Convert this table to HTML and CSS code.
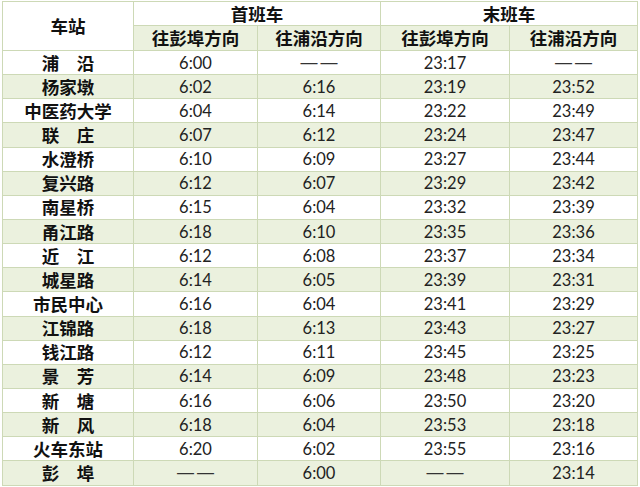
FILE: index.html
```html
<!DOCTYPE html>
<html lang="zh-CN">
<head>
<meta charset="utf-8">
<title>首末班车时刻表</title>
<link rel="stylesheet" href="styles.css">
</head>
<body>
<table class="timetable">
  <colgroup>
    <col class="c-station">
    <col class="c-a">
    <col class="c-b">
    <col class="c-c">
    <col class="c-d">
  </colgroup>
  <thead>
    <tr class="h1">
      <th rowspan="2" class="station-head">车站</th>
      <th colspan="2">首班车</th>
      <th colspan="2">末班车</th>
    </tr>
    <tr class="h2">
      <th>往彭埠方向</th>
      <th>往浦沿方向</th>
      <th>往彭埠方向</th>
      <th>往浦沿方向</th>
    </tr>
  </thead>
  <tbody>
    <tr><th>浦　沿</th><td>6:00</td><td class="dash">——</td><td>23:17</td><td class="dash">——</td></tr>
    <tr><th>杨家墩</th><td>6:02</td><td>6:16</td><td>23:19</td><td>23:52</td></tr>
    <tr><th>中医药大学</th><td>6:04</td><td>6:14</td><td>23:22</td><td>23:49</td></tr>
    <tr><th>联　庄</th><td>6:07</td><td>6:12</td><td>23:24</td><td>23:47</td></tr>
    <tr><th>水澄桥</th><td>6:10</td><td>6:09</td><td>23:27</td><td>23:44</td></tr>
    <tr><th>复兴路</th><td>6:12</td><td>6:07</td><td>23:29</td><td>23:42</td></tr>
    <tr><th>南星桥</th><td>6:15</td><td>6:04</td><td>23:32</td><td>23:39</td></tr>
    <tr><th>甬江路</th><td>6:18</td><td>6:10</td><td>23:35</td><td>23:36</td></tr>
    <tr><th>近　江</th><td>6:12</td><td>6:08</td><td>23:37</td><td>23:34</td></tr>
    <tr><th>城星路</th><td>6:14</td><td>6:05</td><td>23:39</td><td>23:31</td></tr>
    <tr><th>市民中心</th><td>6:16</td><td>6:04</td><td>23:41</td><td>23:29</td></tr>
    <tr><th>江锦路</th><td>6:18</td><td>6:13</td><td>23:43</td><td>23:27</td></tr>
    <tr><th>钱江路</th><td>6:12</td><td>6:11</td><td>23:45</td><td>23:25</td></tr>
    <tr><th>景　芳</th><td>6:14</td><td>6:09</td><td>23:48</td><td>23:23</td></tr>
    <tr><th>新　塘</th><td>6:16</td><td>6:06</td><td>23:50</td><td>23:20</td></tr>
    <tr><th>新　风</th><td>6:18</td><td>6:04</td><td>23:53</td><td>23:18</td></tr>
    <tr><th>火车东站</th><td>6:20</td><td>6:02</td><td>23:55</td><td>23:16</td></tr>
    <tr><th>彭　埠</th><td class="dash">——</td><td>6:00</td><td class="dash">——</td><td>23:14</td></tr>
  </tbody>
</table>
</body>
</html>
```

FILE: styles.css
```css
html, body {
  margin: 0;
  padding: 0;
  background: #ffffff;
}

body {
  padding: 1px 0 0 2px;
}

.timetable {
  border-collapse: collapse;
  table-layout: fixed;
  width: 635px;
  font-family: "Noto Sans CJK SC", "Noto Sans", sans-serif;
  color: #111;
}

.c-station { width: 131px; }
.c-a { width: 124px; }
.c-b { width: 123px; }
.c-c { width: 129px; }
.c-d { width: 128px; }

.timetable th,
.timetable td {
  border: 1px solid #cdd9b6;
  padding: 0;
  text-align: center;
  vertical-align: middle;
  line-height: 20px;
}

.timetable th {
  font-size: 17.5px;
  font-weight: 700;
  color: #111111;
}

.timetable td {
  font-family: Lato, "Open Sans", sans-serif;
  font-size: 16.5px;
  font-weight: 400;
  color: #222222;
}

.timetable td.dash {
  font-family: "Liberation Sans", Arial, sans-serif;
  font-size: 17px;
  letter-spacing: 3px;
  text-indent: 3px;
  color: #333333;
}

.timetable thead .h1 { height: 24px; }
.timetable thead .h2 { height: 25px; }
.timetable thead .h1 th { background: #ffffff; }
.timetable thead .h2 th { background: #ebf1de; }
.timetable thead .station-head { background: #ffffff; }

.timetable tbody tr { height: 24.15px; }
.timetable tbody tr:nth-child(odd) th,
.timetable tbody tr:nth-child(odd) td { background: #ffffff; }
.timetable tbody tr:nth-child(even) th,
.timetable tbody tr:nth-child(even) td { background: #ebf1de; }
```
